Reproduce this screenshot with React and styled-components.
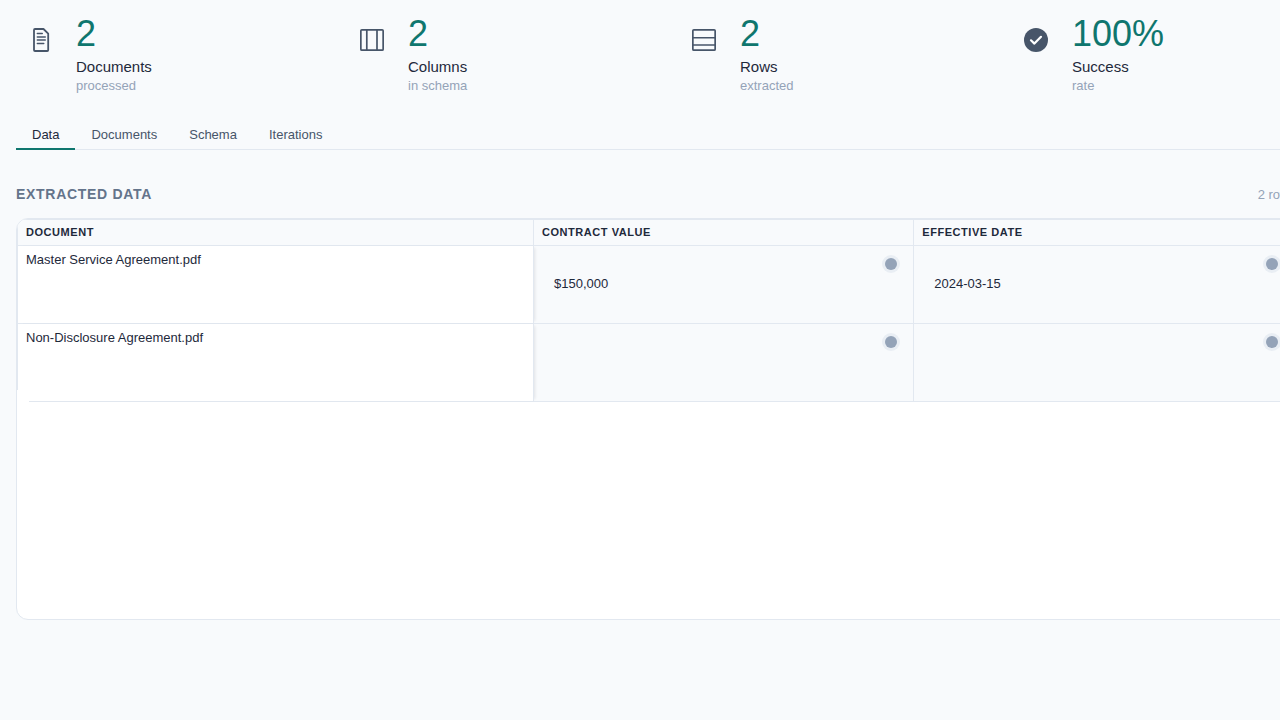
import React from 'react';
import styled, { createGlobalStyle } from 'styled-components';

const Global = createGlobalStyle`
  html, body { margin: 0; padding: 0; height: 100%; overflow: hidden; background: #f8fafc; }
  body { font-family: "Liberation Sans", Arial, sans-serif; }
`;

const Page = styled.div`
  width: 1312px;
  height: 720px;
  box-sizing: border-box;
  padding: 0 16px;
  background: #f8fafc;
`;

const Stats = styled.section`
  display: grid;
  grid-template-columns: repeat(4, 284px);
  column-gap: 48px;
  height: 120px;
  padding-top: 13px;
  box-sizing: border-box;
`;

const Stat = styled.div`
  display: flex;
  align-items: flex-start;
`;

const IconBox = styled.div`
  width: 48px;
  height: 54px;
  margin-right: 12px;
  display: flex;
  align-items: center;
  justify-content: center;
  color: #475569;
  svg { display: block; }
`;

const StatText = styled.div`
  display: flex;
  flex-direction: column;
`;

const StatValue = styled.div`
  font-size: 36px;
  line-height: 41px;
  color: #0f766e;
`;

const StatLabel = styled.div`
  margin-top: 4px;
  font-size: 15px;
  line-height: 18px;
  color: #1e293b;
`;

const StatSub = styled.div`
  margin-top: 2px;
  font-size: 13px;
  line-height: 15px;
  color: #94a3b8;
`;

const Tabs = styled.nav`
  display: flex;
  height: 30px;
  box-sizing: border-box;
  border-bottom: 1px solid #e2e8f0;
`;

const Tab = styled.div`
  padding: 0 16px;
  height: 30px;
  box-sizing: border-box;
  font-size: 13px;
  line-height: 29px;
  color: ${p => (p.$active ? '#1e293b' : '#475569')};
  border-bottom: 2px solid ${p => (p.$active ? '#0f766e' : 'transparent')};
`;

const SectionHead = styled.div`
  display: flex;
  justify-content: space-between;
  align-items: center;
  height: 20px;
  margin-top: 34px;
  margin-bottom: 14px;
`;

const SectionTitle = styled.h2`
  margin: 0;
  font-size: 14px;
  font-weight: 700;
  letter-spacing: 0.7px;
  color: #64748b;
`;

const RowCount = styled.span`
  font-size: 13px;
  color: #94a3b8;
`;

const TableCard = styled.div`
  height: 402px;
  box-sizing: border-box;
  border: 1px solid #e2e8f0;
  border-radius: 12px;
  background: #fff;
  overflow: hidden;
`;

const GridRow = styled.div`
  display: grid;
  grid-template-columns: 517px 380.3px 1fr;
  height: ${p => (p.$head ? '27px' : '78px')};
  box-sizing: border-box;
  border-top: ${p => (p.$head ? '1px solid #e2e8f0' : '0')};
  border-bottom: 1px solid #e2e8f0;
`;

const HeadCell = styled.div`
  padding: 0 8px;
  background: #f8fafc;
  font-size: 11px;
  font-weight: 700;
  line-height: 25px;
  letter-spacing: 0.55px;
  color: #1e293b;
  border-left: ${p => (p.$first ? '1px solid #e2e8f0' : '0')};
  border-right: ${p => (p.$last ? '0' : '1px solid #e2e8f0')};
`;

const DocCell = styled.div`
  position: relative;
  z-index: 1;
  padding: 6px 8px 0;
  background: #fff;
  font-size: 13px;
  line-height: 15px;
  color: #1e293b;
  border-left: 1px solid #e2e8f0;
  border-right: 1px solid #e2e8f0;
  box-shadow: 3px 0 3px -2px rgba(15, 23, 42, 0.1);
`;

/* white patch that hides the start of the last row's rule and inner edge */
const CornerMask = styled.span`
  position: absolute;
  left: -1px;
  bottom: -1px;
  width: 12px;
  height: 12px;
  background: #fff;
`;

const ValueCell = styled.div`
  position: relative;
  display: flex;
  align-items: center;
  padding: 0 20px 2px;
  background: #f8fafc;
  font-size: 13px;
  color: #1e293b;
  border-right: ${p => (p.$last ? '0' : '1px solid #e2e8f0')};
`;

const Dot = styled.span`
  position: absolute;
  top: 12px;
  right: ${p => (p.$last ? '17px' : '16px')};
  width: 12px;
  height: 12px;
  border-radius: 50%;
  background: #94a3b8;
  box-shadow: 0 0 0 3px #e9eef4;
`;

const DocIcon = () => (
  <svg width="24" height="24" viewBox="0 0 24 24" fill="none" stroke="currentColor" strokeLinecap="round" strokeLinejoin="round">
    <path d="M7 1h8.5L20.2 5.7V22a1 1 0 0 1-1 1H7a1 1 0 0 1-1-1V2a1 1 0 0 1 1-1z" strokeWidth="1.8" />
    <path d="M9.3 5.5h5M9.3 9h8M9.3 12h8M9.3 15.5h6.5" strokeWidth="1.4" />
  </svg>
);
const ColumnsIcon = () => (
  <svg width="24" height="24" viewBox="0 0 24 24" fill="none" stroke="currentColor" strokeWidth="1.7" strokeLinejoin="round">
    <rect x=".85" y="1.85" width="22.3" height="20.3" rx="1" />
    <path d="M6.8 1.85v20.3M17 1.85v20.3" />
  </svg>
);
const RowsIcon = () => (
  <svg width="24" height="24" viewBox="0 0 24 24" fill="none" stroke="currentColor" strokeWidth="1.7" strokeLinejoin="round">
    <rect x=".85" y="1.85" width="22.3" height="20.3" rx="1" />
    <path d="M.85 9.75h22.3M.85 17h22.3" />
  </svg>
);
const CheckIcon = () => (
  <svg width="24" height="24" viewBox="0 0 24 24">
    <circle cx="12" cy="12" r="12" fill="currentColor" />
    <path d="M7 12.3l3.4 3.3L17 8.8" fill="none" stroke="#fff" strokeWidth="2.2" strokeLinecap="round" strokeLinejoin="round" />
  </svg>
);

const stats = [
  { icon: <DocIcon />, value: '2', label: 'Documents', sub: 'processed' },
  { icon: <ColumnsIcon />, value: '2', label: 'Columns', sub: 'in schema' },
  { icon: <RowsIcon />, value: '2', label: 'Rows', sub: 'extracted' },
  { icon: <CheckIcon />, value: '100%', label: 'Success', sub: 'rate' },
];

const rows = [
  { doc: 'Master Service Agreement.pdf', value: '$150,000', date: '2024-03-15' },
  { doc: 'Non-Disclosure Agreement.pdf', value: '', date: '', last: true },
];

export default function App() {
  return (
    <Page>
      <Global />
      <Stats>
        {stats.map(s => (
          <Stat key={s.label}>
            <IconBox>{s.icon}</IconBox>
            <StatText>
              <StatValue>{s.value}</StatValue>
              <StatLabel>{s.label}</StatLabel>
              <StatSub>{s.sub}</StatSub>
            </StatText>
          </Stat>
        ))}
      </Stats>
      <Tabs>
        <Tab $active>Data</Tab>
        <Tab>Documents</Tab>
        <Tab>Schema</Tab>
        <Tab>Iterations</Tab>
      </Tabs>
      <SectionHead>
        <SectionTitle>EXTRACTED DATA</SectionTitle>
        <RowCount>2 rows</RowCount>
      </SectionHead>
      <TableCard>
        <GridRow $head>
          <HeadCell $first>DOCUMENT</HeadCell>
          <HeadCell>CONTRACT VALUE</HeadCell>
          <HeadCell $last>EFFECTIVE DATE</HeadCell>
        </GridRow>
        {rows.map(r => (
          <GridRow key={r.doc}>
            <DocCell>{r.doc}{r.last && <CornerMask />}</DocCell>
            <ValueCell>{r.value}<Dot /></ValueCell>
            <ValueCell $last>{r.date}<Dot $last /></ValueCell>
          </GridRow>
        ))}
      </TableCard>
    </Page>
  );
}
